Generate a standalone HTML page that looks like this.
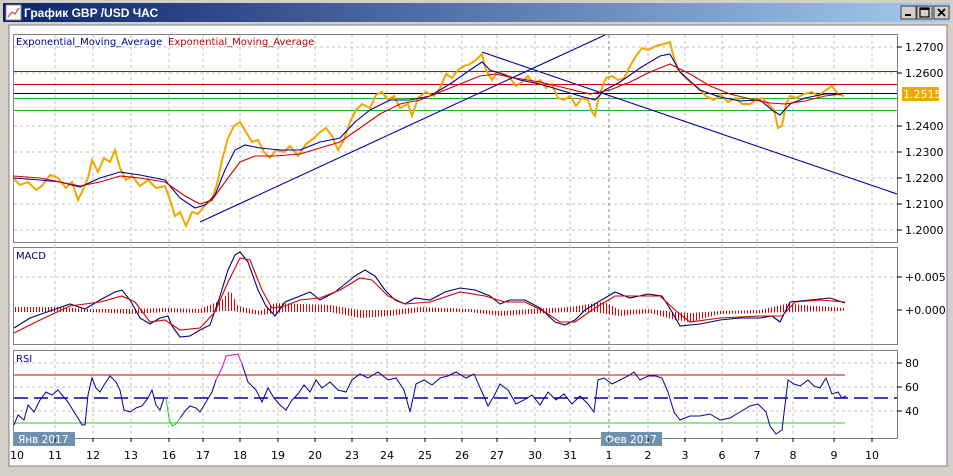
<!DOCTYPE html>
<html><head><meta charset="utf-8"><style>
body{margin:0;width:953px;height:476px;overflow:hidden;background:#d4d0c8;font-family:"DejaVu Sans",sans-serif}
svg{position:absolute;left:0;top:0}
</style></head><body>
<svg width="953" height="476" viewBox="0 0 953 476" xmlns="http://www.w3.org/2000/svg" font-family="DejaVu Sans, Liberation Sans, sans-serif">
<defs>
<linearGradient id="tb" x1="0" x2="1"><stop offset="0" stop-color="#0a246a"/><stop offset="1" stop-color="#a6caf0"/></linearGradient>
<pattern id="hp" width="3" height="10" patternUnits="userSpaceOnUse"><rect width="1" height="10" fill="#e00000"/></pattern>
</defs>
<rect x="0" y="0" width="953" height="476" fill="#d4d0c8"/>
<rect x="3" y="3" width="947" height="19" fill="url(#tb)"/>
<rect x="6" y="5" width="15" height="15" fill="#fff" stroke="#888"/>
<polyline points="8,17 12,12 15,14 19,8" fill="none" stroke="#d04040" stroke-width="1.2"/>
<text x="24" y="17" font-size="12" font-weight="bold" fill="#fff" font-family="Liberation Sans, sans-serif">График GBP /USD  ЧАС</text>
<g fill="#d4d0c8" stroke="#404040"><rect x="901" y="6" width="15" height="13"/><rect x="917" y="6" width="15" height="13"/><rect x="934" y="6" width="15" height="13"/></g>
<rect x="905" y="14" width="6" height="2" fill="#000"/>
<rect x="920" y="8" width="9" height="9" fill="none" stroke="#000" stroke-width="1.2"/><rect x="920" y="8" width="9" height="2" fill="#000"/>
<path d="M938 9l7 7M945 9l-7 7" stroke="#000" stroke-width="1.8"/>
<rect x="9" y="25" width="938" height="441" fill="#fff" stroke="#808080"/>
<g fill="none" stroke="#808080"><rect x="13.5" y="34.5" width="884" height="208"/><rect x="13.5" y="247.5" width="884" height="97"/><rect x="13.5" y="350.5" width="884" height="88"/></g>
<g stroke="#c0c0c0" stroke-dasharray="3,3">
<path d="M55 35V438M93 35V438M131 35V438M169 35V438M203 35V438M240 35V438M278 35V438M315 35V438M352 35V438M387 35V438M425 35V438M462 35V438M497 35V438M535 35V438M570 35V438M648 35V438M685 35V438M722 35V438M757 35V438M793 35V438M834 35V438M872 35V438"/>
<path d="M14 47H897M14 73H897M14 126H897M14 152H897M14 178H897M14 204H897M14 230H897M14 277H897M14 363H897M14 387H897M14 411H897"/>
</g>
<path d="M609 35V438" stroke="#808080" stroke-dasharray="3,3"/>
<g stroke="#000"><path d="M897 47h5M897 73h5M897 126h5M897 152h5M897 178h5M897 204h5M897 230h5M897 277h5M897 310h5M897 363h5M897 387h5M897 411h5"/></g>
<g font-size="11" fill="#000">
<text x="905" y="51">1.2700</text><text x="905" y="77">1.2600</text><text x="905" y="130">1.2400</text><text x="905" y="156">1.2300</text><text x="905" y="182">1.2200</text><text x="905" y="208">1.2100</text><text x="905" y="234">1.2000</text>
<text x="905" y="281">+0.005</text><text x="905" y="314">+0.000</text>
<text x="905" y="367">80</text><text x="905" y="391">60</text><text x="905" y="415">40</text>
</g>
<rect x="902" y="87" width="37" height="14" fill="#f0a800"/><text x="903" y="98" font-size="11" fill="#fff">1.2515</text>
<path d="M14 71.5H897M14 84.5H897" stroke="#d00000"/>
<path d="M14 93.5H897" stroke="#000"/>
<path d="M14 98.5H897M14 110.5H897" stroke="#20b020"/>
<polyline fill="none" stroke="#f0a800" stroke-width="2" points="13,178 20,185 28,182 36,190 42,186 50,175 58,178 66,188 72,182 78,200 82,192 88,178 92,160 98,172 104,158 110,162 115,150 120,168 126,180 132,176 140,186 148,180 156,188 165,186 170,200 175,216 180,212 186,226 192,212 198,214 205,205 212,200 218,180 222,160 228,138 234,126 240,122 246,132 252,142 258,140 264,152 270,158 276,150 284,152 290,146 298,156 306,144 314,138 320,132 326,128 332,136 338,150 344,140 350,122 356,110 362,104 370,108 376,95 382,92 388,100 394,96 400,108 408,104 412,116 418,98 426,92 434,96 440,88 446,74 452,78 458,70 464,66 470,64 476,60 482,54 486,70 492,80 498,72 504,74 510,78 516,86 522,82 528,76 534,84 540,80 546,88 552,84 558,98 564,100 570,96 576,106 582,98 588,100 592,112 595,116 598,100 602,88 606,78 612,76 618,80 624,78 630,66 636,56 642,48 648,50 656,46 664,44 670,42 674,58 678,70 684,76 690,82 698,88 706,96 714,100 720,94 728,102 736,98 742,104 750,104 756,100 762,98 768,104 774,110 778,128 782,126 786,104 790,96 796,98 804,94 812,92 818,96 826,90 832,86 838,94 844,96"/>
<polyline fill="none" stroke="#0000a0" stroke-width="1.1" points="13,178 40,180 60,182 80,187 100,178 120,172 140,175 165,180 180,198 195,208 205,205 215,195 225,170 235,150 245,145 260,148 280,150 300,150 320,142 340,138 355,122 370,110 390,100 410,100 430,96 450,84 470,70 482,62 490,70 505,75 520,80 540,84 560,90 580,96 595,100 605,90 620,82 640,68 660,56 670,54 680,72 700,90 720,97 740,101 760,100 772,110 780,115 790,104 805,98 825,94 840,94"/>
<polyline fill="none" stroke="#d00000" stroke-width="1.1" points="13,176 40,178 60,182 80,186 100,182 120,176 140,178 165,182 185,196 200,204 212,200 225,182 240,162 255,156 275,156 300,154 320,148 340,142 360,128 380,114 400,104 420,100 440,92 460,84 480,76 495,74 515,78 540,82 565,88 590,94 610,90 630,82 650,72 670,64 690,74 710,86 730,94 750,99 770,103 785,104 805,101 825,96 842,94"/>
<path d="M200 222L605 35M482 52L897 194" stroke="#0000a0" stroke-width="1.1" fill="none"/>
<text x="16" y="45" font-size="10" fill="#0000a0">Exponential_Moving_Average</text>
<text x="168" y="45" font-size="10" fill="#c00000">Exponential_Moving_Average</text>
<polygon fill="url(#hp)" points="14,307 60,307 90,309 130,309 165,308 200,309 222,300 230,290 238,306 260,311 275,303 330,305 360,310 390,310 420,307 470,309 500,311 530,309 570,307 596,303 605,302 620,310 650,309 675,312 690,313 720,311 760,310 790,303 800,305 845,308 845,311 790,312 760,313 720,314 690,322 675,320 650,313 620,316 605,314 596,312 570,312 530,314 500,316 470,312 420,312 390,316 360,318 330,312 285,312 260,315 240,312 232,311 225,311 200,313 165,312 130,314 90,312 60,312 14,312"/>
<polyline fill="none" stroke="#000070" stroke-width="1.1" points="14,328 30,318 50,311 70,304 85,309 100,300 115,292 122,290 130,300 140,318 150,324 160,318 168,316 172,326 180,337 190,336 200,330 210,325 220,296 228,270 235,255 240,252 248,262 258,290 266,306 275,316 285,302 300,296 310,292 320,300 335,292 345,284 355,276 365,270 375,276 385,290 395,300 405,304 415,298 430,300 445,292 460,288 475,290 490,296 500,304 510,300 525,300 540,308 555,322 565,325 575,320 585,310 598,302 605,298 615,292 630,298 648,294 662,296 672,312 680,326 700,324 720,320 740,318 760,318 772,316 780,322 790,302 810,300 830,298 845,303"/>
<polyline fill="none" stroke="#d00000" stroke-width="1.1" points="14,333 40,320 70,306 100,302 122,296 135,302 150,322 165,320 180,330 200,328 215,312 228,282 240,258 250,260 262,290 272,308 285,306 300,300 320,298 340,290 360,278 372,280 388,296 405,304 430,302 460,292 485,296 505,302 525,302 545,312 560,322 575,322 595,308 615,296 640,296 660,296 675,310 690,322 720,318 760,316 782,316 795,302 820,300 845,302"/>
<text x="16" y="259" font-size="10" fill="#000050">MACD</text>
<path d="M14 375H845" stroke="#d00000"/>
<path d="M14 423H845" stroke="#20d020"/>
<path d="M14 398H897" stroke="#0000a0" stroke-width="1.5" stroke-dasharray="14,6"/>
<polyline fill="none" stroke="#0000a0" stroke-width="1" points="14,425 18,415 24,420 28,405 34,412 40,400 46,392 52,395 58,390 62,395 68,402 74,412 78,418 82,425 85,425 88,395 92,378 96,388 100,392 104,385 110,376 116,382 120,390 124,410 130,412 136,408 142,406 148,398 152,390 156,405 160,410 164,398 166,398"/>
<polyline fill="none" stroke="#20d020" stroke-width="1" points="166,398 169,418 172,426 176,424 180,418"/>
<polyline fill="none" stroke="#0000a0" stroke-width="1" points="180,418 186,410 190,406 196,408 200,412 206,402 212,392 216,380"/>
<polyline fill="none" stroke="#e000e0" stroke-width="1" points="216,380 222,368 226,356 232,355 238,354 242,364"/>
<polyline fill="none" stroke="#0000a0" stroke-width="1" points="242,364 248,382 256,390 262,402 268,388 274,398 280,405 286,410 292,400 298,394 304,385 310,392 316,380 322,388 330,382 338,390 346,392 352,380 360,374 368,378 378,372 388,380 396,378 404,390 410,412 416,384 424,380 432,385 440,378 448,376 456,372 466,378 474,374 482,392 488,406 494,396 500,384 508,390 516,404 524,400 532,395 540,405 548,392 556,400 564,394 572,404 580,396 588,404 594,412 598,380 604,378 612,384 620,380 628,376 634,372 640,380 648,376 656,376 662,378 668,392 674,412 680,420 690,416 700,416 710,414 720,420 730,418 740,412 750,406 758,404 766,412 770,426 776,434 782,430 788,380 794,384 800,386 808,380 814,386 820,388 826,378 832,394 838,392 842,398 846,396"/>
<text x="16" y="362" font-size="10" fill="#0000a0">RSI</text>
<rect x="13" y="432" width="62" height="14" fill="#7090b0"/><text x="18" y="443" font-size="10.5" fill="#fff">Янв 2017</text>
<rect x="601" y="432" width="61" height="14" fill="#7090b0"/><text x="605" y="443" font-size="10.5" fill="#fff">Фев 2017</text>
<g stroke="#000"><path d="M55 438v4M93 438v4M131 438v4M169 438v4M203 438v4M240 438v4M278 438v4M315 438v4M352 438v4M387 438v4M425 438v4M462 438v4M497 438v4M535 438v4M570 438v4M609 438v4M648 438v4M685 438v4M722 438v4M757 438v4M793 438v4M834 438v4M872 438v4"/></g>
<g font-size="11" fill="#000" text-anchor="middle">
<text x="17" y="459">10</text><text x="55" y="459">11</text><text x="93" y="459">12</text><text x="131" y="459">13</text><text x="169" y="459">16</text><text x="203" y="459">17</text><text x="240" y="459">18</text><text x="278" y="459">19</text><text x="315" y="459">20</text><text x="352" y="459">23</text><text x="387" y="459">24</text><text x="425" y="459">25</text><text x="462" y="459">26</text><text x="497" y="459">27</text><text x="535" y="459">30</text><text x="570" y="459">31</text><text x="609" y="459">1</text><text x="648" y="459">2</text><text x="685" y="459">3</text><text x="722" y="459">6</text><text x="757" y="459">7</text><text x="793" y="459">8</text><text x="834" y="459">9</text><text x="872" y="459">10</text>
</g>
</svg>
</body></html>
